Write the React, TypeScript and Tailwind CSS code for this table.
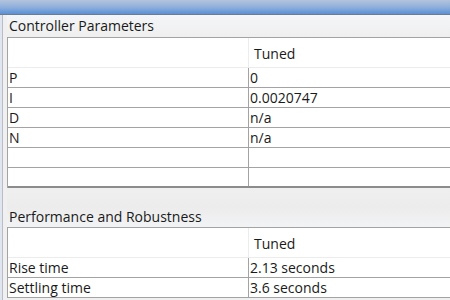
// Tuner results pane: two property tables under group captions.

type Row = { label: string; value: string }

const controllerRows: Row[] = [
  { label: 'P', value: '0' },
  { label: 'I', value: '0.0020747' },
  { label: 'D', value: 'n/a' },
  { label: 'N', value: 'n/a' },
  { label: '', value: '' },
  { label: '', value: '' },
]

const performanceRows: Row[] = [
  { label: 'Rise time', value: '2.13 seconds' },
  { label: 'Settling time', value: '3.6 seconds' },
]

function Caption({ text, className }: { text: string; className?: string }) {
  return (
    <div className={`flex items-end pl-[2px] text-[14px] leading-none text-[#1a1a1a] ${className ?? ''}`}>
      {text}
    </div>
  )
}

function ParamTable({ rows, lastBorder }: { rows: Row[]; lastBorder?: boolean }) {
  return (
    <div className="w-[460px] border-t border-l border-[#a3a3a3] bg-white">
      <div className="flex h-[30px] border-b border-[#ececec]">
        <div className="w-[241px] border-r border-[#ececec]" />
        <div className="flex-1 flex items-center pl-[5px] pt-[2px] text-[14px] text-[#1a1a1a]">Tuned</div>
      </div>
      {rows.map((r, i) => (
        <div
          key={i}
          className={`flex h-[20px] ${
            lastBorder && i === rows.length - 1 ? 'border-b-2 border-[#8c8c8c]' : 'border-b border-[#a3a3a3]'
          }`}
        >
          <div className="w-[241px] border-r border-[#a3a3a3] pl-[1px] flex items-center text-[14px] leading-none text-[#1a1a1a]">
            {r.label}
          </div>
          <div className="flex-1 pl-[1px] flex items-center text-[14px] leading-none text-[#1a1a1a]">{r.value}</div>
        </div>
      ))}
    </div>
  )
}

export default function App() {
  return (
    <div
      className="w-[450px] h-[300px] overflow-hidden bg-[#f0f0f0] flex flex-col"
      style={{ fontFamily: '"Open Sans", "Noto Sans", sans-serif' }}
    >
      <div className="h-[15px] shrink-0 bg-gradient-to-b from-[#b4c3dd] via-[#8fb0dc] to-[#5c90d4] border-b border-[#6a7c98]" />
      <div className="flex flex-1 min-h-0">
        <div className="w-[3px] shrink-0 bg-[#dfe6ef] border-r border-[#b9bec6]" />
        <div className="flex-1 min-w-0 overflow-hidden pl-[4px] flex flex-col">
          <Caption text="Controller Parameters" className="h-[22px] pb-[4px] bg-gradient-to-b from-[#f3f5f8] to-[#efefef]" />
          <ParamTable rows={controllerRows} lastBorder />
          <Caption
            text="Performance and Robustness"
            className="h-[39px] pb-[3px] bg-gradient-to-b from-[#efefef] via-[#ececec] to-[#f2f3f5]"
          />
          <ParamTable rows={performanceRows} />
        </div>
      </div>
    </div>
  )
}
